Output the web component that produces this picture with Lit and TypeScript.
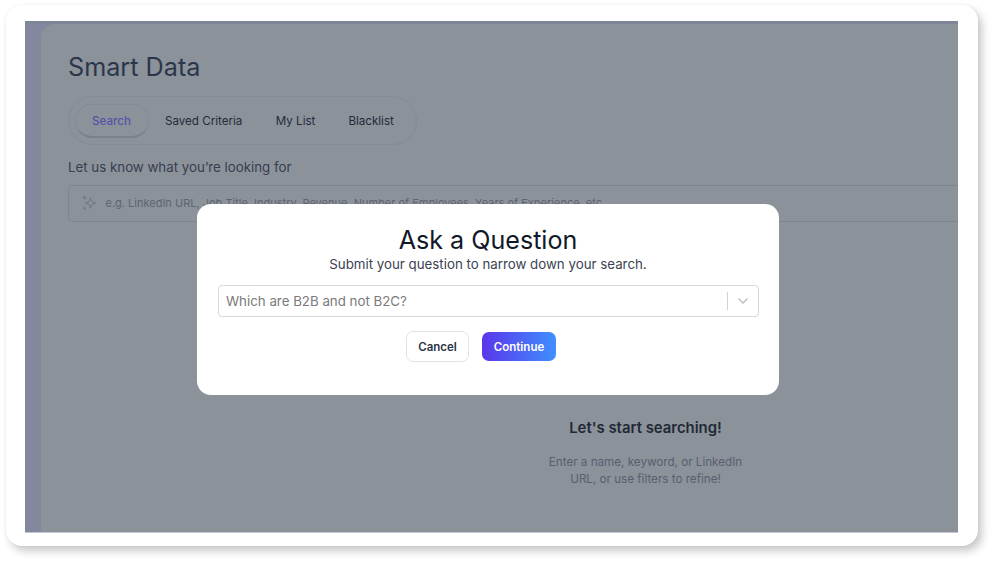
import { LitElement, html, css } from "lit";
import { customElement } from "lit/decorators.js";

@customElement("app-root")
export class AppRoot extends LitElement {
  static styles = css`
    :host {
      display: block;
      width: 993px;
      height: 561px;
      background: #fff;
      font-family: Inter, "Liberation Sans", sans-serif;
      overflow: hidden;
    }
    .page { padding: 5px 15px 15px 6px; width: 972px; height: 541px; box-sizing: content-box; }
    .card {
      width: 972px;
      height: 541px;
      box-sizing: border-box;
      background: #fff;
      border-radius: 16px;
      box-shadow: 4px 5px 9px rgba(0,0,0,0.22), 0 0 3px rgba(0,0,0,0.05);
      padding: 16px 20px 13px 19px;
    }
    .frame {
      position: relative;
      height: 512px;
      background: #7f869a;
      overflow: hidden;
      display: flex;
      border-bottom: 1px solid #c3c6d2;
      box-sizing: border-box;
    }
    .rail { flex: 1; display: flex; margin-top: 3px; background: #84889e; min-width: 0; }
    .side { width: 16px; flex: none; }
    .main {
      position: relative;
      flex: 1;
      background: #8c9299;
      border-top-left-radius: 14px;
      padding: 27px 0 0 27px;
      min-width: 0;
    }
    h1 {
      margin: 0;
      font-size: 25.2px;
      line-height: 32px;
      font-weight: 400;
      color: #2a364b;
    }
    .tabs {
      margin-top: 13px;
      width: 349px;
      height: 49px;
      box-sizing: border-box;
      border: 1px solid #858b93;
      border-radius: 25px;
      display: flex;
      align-items: center;
      padding: 0 6px;
      font-size: 11.6px;
      font-weight: 400;
      color: #222b3a;
    }
    .tab { white-space: nowrap; }
    .tab.active {
      width: 74px;
      height: 34px;
      padding: 1px 1px 0 0;
      border-radius: 17px;
      border: 1px solid #858b93;
      border-bottom: 2px solid #7b818a;
      box-sizing: border-box;
      display: flex;
      align-items: center;
      justify-content: center;
      color: #5453a8;
      font-weight: 500;
    }
    .t2 { margin-left: 16px; }
    .t3 { margin-left: 33.5px; }
    .t4 { margin-left: 33px; }
    .label {
      margin-top: 12px;
      font-size: 13.3px;
      line-height: 20px;
      color: #363e50;
    }
    .search {
      margin-top: 8px;
      height: 37px;
      box-sizing: border-box;
      border: 1px solid #7f858e;
      border-right: none;
      border-radius: 5px 0 0 5px;
      display: flex;
      align-items: center;
      padding: 0 0 2px 12px;
      gap: 8.5px;
      font-size: 11px;
      color: #5d646f;
      white-space: nowrap;
      overflow: hidden;
    }
    .search svg { flex: none; }
    .empty {
      position: absolute;
      left: 507px;
      top: 397px;
      width: 227px;
      text-align: center;
    }
    .empty h2 {
      margin: 0;
      font-size: 14.9px;
      line-height: 20px;
      font-weight: 600;
      color: #1f2937;
    }
    .empty p {
      margin: 16px auto 0;
      width: 200px;
      font-size: 11.65px;
      line-height: 16.5px;
      color: #566070;
    }
    .modal {
      position: absolute;
      left: 172px;
      top: 183px;
      width: 582px;
      height: 191px;
      box-sizing: border-box;
      background: #fff;
      border-radius: 14px;
      padding: 20px 20px 0 21px;
      display: flex;
      flex-direction: column;
      align-items: center;
    }
    .modal h3 {
      margin: 0 1px 0 0;
      font-size: 25.1px;
      line-height: 32px;
      font-weight: 400;
      color: #111827;
    }
    .modal .sub {
      margin-right: 1px;
      font-size: 13.3px;
      line-height: 16px;
      color: #3b4252;
    }
    .select {
      margin-top: 13px;
      width: 541px;
      height: 32px;
      box-sizing: border-box;
      border: 1px solid #d5d8dd;
      border-radius: 4px;
      display: flex;
      align-items: center;
      padding-left: 7px;
      font-size: 13.3px;
      color: #7a7a7a;
    }
    .select .v { flex: 1; }
    .sep { width: 1px; height: 18px; background: #d3d3d3; }
    .chev { width: 30px; display: flex; justify-content: center; }
    .buttons {
      margin-top: 14px;
      margin-right: 15px;
      display: flex;
      align-items: center;
      gap: 13px;
    }
    button {
      font-family: inherit;
      font-size: 11.5px;
      font-weight: 600;
      border-radius: 7px;
      padding: 0;
    }
    .cancel {
      width: 63px;
      height: 31px;
      background: #fff;
      border: 1px solid #e0e4ea;
      color: #2b3443;
    }
    .continue {
      width: 74px;
      height: 29px;
      border: none;
      color: #fff;
      background: linear-gradient(90deg, #5b36ea, #3f8fff);
    }
  `;

  render() {
    return html`
      <div class="page">
        <div class="card">
          <div class="frame">
            <div class="rail">
              <div class="side"></div>
              <div class="main">
                <h1>Smart Data</h1>
                <div class="tabs">
                  <div class="tab active">Search</div>
                  <div class="tab t2">Saved Criteria</div>
                  <div class="tab t3">My List</div>
                  <div class="tab t4">Blacklist</div>
                </div>
                <div class="label">Let us know what you’re looking for</div>
                <div class="search">
                  <svg width="16" height="16" viewBox="0 0 16 16" fill="none" stroke="#747a84" stroke-width="1.1">
                    <path d="M9.5 2.5 C10 6 11 7.2 15 8 C11 8.8 10 10 9.5 13.5 C9 10 8 8.8 4 8 C8 7.2 9 6 9.5 2.5Z" />
                    <path d="M3.5 .8v3.6M1.7 2.6h3.6M3.5 11.6v3.4M1.8 13.3h3.4" />
                  </svg>
                  <span>e.g. LinkedIn URL, Job Title, Industry, Revenue, Number of Employees, Years of Experience, etc.</span>
                </div>
              </div>
            </div>
            <div class="empty">
              <h2>Let's start searching!</h2>
              <p>Enter a name, keyword, or LinkedIn URL, or use filters to refine!</p>
            </div>
            <div class="modal">
              <h3>Ask a Question</h3>
              <div class="sub">Submit your question to narrow down your search.</div>
              <div class="select">
                <span class="v">Which are B2B and not B2C?</span>
                <span class="sep"></span>
                <span class="chev">
                  <svg width="12" height="8" viewBox="0 0 12 8" fill="none" stroke="#c4c4c4" stroke-width="1.6">
                    <path d="M1.5 1.5 6 6l4.5-4.5" />
                  </svg>
                </span>
              </div>
              <div class="buttons">
                <button class="cancel">Cancel</button>
                <button class="continue">Continue</button>
              </div>
            </div>
          </div>
        </div>
      </div>
    `;
  }
}
